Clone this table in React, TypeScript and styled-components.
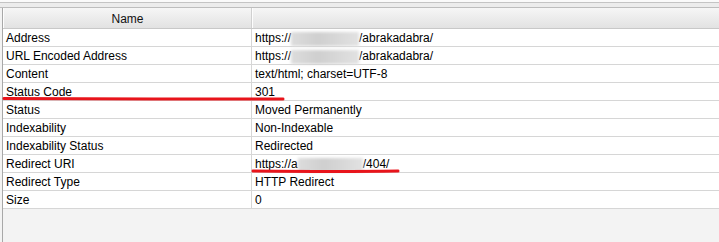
import styled, { createGlobalStyle } from 'styled-components'
import { ReactElement, ReactNode } from 'react'

const GlobalStyle = createGlobalStyle`
  html, body {
    margin: 0;
    padding: 0;
    background: #f3f3f3;
    font-family: 'Liberation Sans', Arial, sans-serif;
    font-size: 12px;
    color: #000;
  }
`

const Page = styled.div`
  width: 719px;
  height: 242px;
  overflow: hidden;
  position: relative;
  background: #f3f3f3;
`

const TopStrip = styled.div`
  height: 2px;
  background: #fafafa;
  border-bottom: 1px solid #c4c4c4;
`

const TabBand = styled.div`
  height: 4px;
  background: #ececec;
  border-bottom: 1px solid #bdbdbd;
`

const Grid = styled.div`
  margin-left: 2px;
  border-left: 1px solid #a8a8a8;
  height: 240px;
`

const HeaderRow = styled.div`
  display: grid;
  grid-template-columns: 249px 1fr;
  height: 20px;
  border-bottom: 1px solid #c8c8c8;
`

const HeaderCell = styled.div<{ $last?: boolean }>`
  display: flex;
  align-items: center;
  justify-content: center;
  background: linear-gradient(#f6f6f6, #e2e2e2);
  border-right: ${(p) => (p.$last ? 'none' : '1px solid #d0d0d0')};
  border-left: 1px solid #fdfdfd;
  color: #111;
  padding-top: 1px;
`

const Row = styled.div`
  display: grid;
  grid-template-columns: 249px 1fr;
  height: 17px;
  background: #fff;
  border-bottom: 1px solid #d6d6d6;
`

const Cell = styled.div<{ $first?: boolean }>`
  display: flex;
  align-items: center;
  padding-left: 3px;
  border-right: ${(p) => (p.$first ? '1px solid #d6d6d6' : 'none')};
  white-space: nowrap;
  line-height: 17px;
  padding-top: 1px;
`

const Blur = styled.span<{ $w: number }>`
  display: inline-block;
  width: ${(p) => p.$w}px;
  height: 14px;
  background: linear-gradient(90deg, #dcdcdc, #cfcfcf 40%, #d8d8d8 70%, #e2e2e2);
  filter: blur(1.5px);
`

const Marks = styled.svg`
  position: absolute;
  left: 0;
  top: 0;
  pointer-events: none;
`

const rows: { name: string; value: ReactNode }[] = [
  { name: 'Address', value: <>https://<Blur $w={68} />/abrakadabra/</> },
  { name: 'URL Encoded Address', value: <>https://<Blur $w={68} />/abrakadabra/</> },
  { name: 'Content', value: 'text/html; charset=UTF-8' },
  { name: 'Status Code', value: '301' },
  { name: 'Status', value: 'Moved Permanently' },
  { name: 'Indexability', value: 'Non-Indexable' },
  { name: 'Indexability Status', value: 'Redirected' },
  { name: 'Redirect URI', value: <>https://a<Blur $w={65} />/404/</> },
  { name: 'Redirect Type', value: 'HTTP Redirect' },
  { name: 'Size', value: '0' },
]

const App = (): ReactElement => {
  return (
    <>
      <GlobalStyle />
      <Page>
        <TopStrip />
        <TabBand />
        <Grid>
          <HeaderRow>
            <HeaderCell>Name</HeaderCell>
            <HeaderCell $last />
          </HeaderRow>
          {rows.map((r) => (
            <Row key={r.name}>
              <Cell $first>{r.name}</Cell>
              <Cell>{r.value}</Cell>
            </Row>
          ))}
        </Grid>
        <Marks width="719" height="242">
          <path
            d="M4 98.5 C 80 98.8, 200 99.3, 283 99"
            stroke="#e8141b"
            strokeWidth="3"
            strokeLinecap="round"
            fill="none"
          />
          <path
            d="M253 171 C 300 171.5, 350 171.8, 398 171"
            stroke="#e8141b"
            strokeWidth="3"
            strokeLinecap="round"
            fill="none"
          />
        </Marks>
      </Page>
    </>
  )
}

export default App
